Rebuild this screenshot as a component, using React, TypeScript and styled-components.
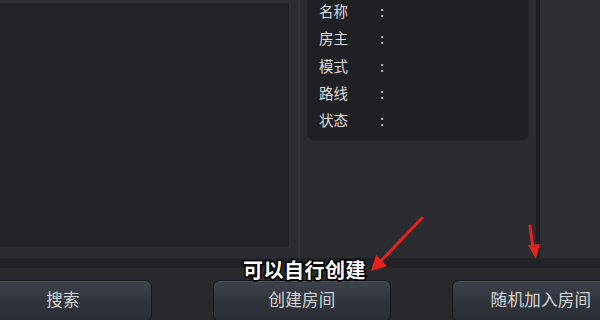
import React from "react";
import styled, { createGlobalStyle } from "styled-components";

const GlobalStyle = createGlobalStyle`
  html, body {
    margin: 0;
    padding: 0;
    background: #29292c;
  }
  body {
    font-family: "Noto Sans CJK SC", "Noto Sans", sans-serif;
  }
  * {
    box-sizing: border-box;
  }
`;

const infoRows = ["名称", "房主", "模式", "路线", "状态"];
const buttons = ["搜索", "创建房间", "随机加入房间"];

const App = () => {
  return (
    <Screen>
      <GlobalStyle />
      <TopArea>
        <LeftColumn>
          <ListPanel />
        </LeftColumn>
        <MiddleColumn>
          <InfoCard>
            {infoRows.map((label) => (
              <InfoRow key={label}>
                <InfoLabel>{label}</InfoLabel>
                <InfoColon>:</InfoColon>
              </InfoRow>
            ))}
          </InfoCard>
        </MiddleColumn>
        <Divider />
        <RightColumn />
      </TopArea>
      <Band />
      <ButtonBar>
        {buttons.map((text) => (
          <ActionButton key={text}>{text}</ActionButton>
        ))}
      </ButtonBar>
      <Caption>可以自行创建</Caption>
      <Arrows width="600" height="320" viewBox="0 0 600 320">
        <line x1="422" y1="218" x2="380" y2="262" stroke="#e8201c" strokeWidth="3" strokeLinecap="round" />
        <polygon points="371,271 376,255 387,266" fill="#e8201c" />
        <line x1="530" y1="226" x2="533" y2="248" stroke="#e8201c" strokeWidth="3" strokeLinecap="round" />
        <polygon points="536,259 528,245 540,244" fill="#e8201c" />
      </Arrows>
    </Screen>
  );
};
export default App;

const Screen = styled.div`
  position: relative;
  width: 600px;
  height: 320px;
  overflow: hidden;
  background: #29292c;
`;

const TopArea = styled.div`
  display: flex;
  height: 258px;
`;

const LeftColumn = styled.div`
  flex: none;
  width: 300px;
  padding: 0 7px 10px 0;
  border-right: 2px solid #35363a;
  background: #2a2b2e;
  display: flex;
`;

const ListPanel = styled.div`
  flex: 1;
  background: #212224;
  border-top: 3px solid #2c2d30;
  border-right: 2px solid #2f3033;
  border-bottom: 1px solid #2f3033;
`;

const MiddleColumn = styled.div`
  flex: none;
  width: 236px;
  padding: 0 7px;
  background: #2b2c30;
`;

const InfoCard = styled.div`
  margin-top: -6px;
  height: 147px;
  padding: 2px 0 0 11px;
  background: #1f2023;
  border: 1px solid #26272a;
  border-radius: 7px;
  display: flex;
  flex-direction: column;
`;

const InfoRow = styled.div`
  display: flex;
  align-items: center;
  height: 27.3px;
  color: #dedede;
  font-size: 14.5px;
`;

const InfoLabel = styled.span`
  width: 61px;
`;

const InfoColon = styled.span`
  color: #cfcfcf;
`;

const Divider = styled.div`
  flex: none;
  width: 4px;
  background: #1d1e21;
`;

const RightColumn = styled.div`
  flex: 1;
  background: #2d2e32;
`;

const Band = styled.div`
  height: 10px;
  background: #222326;
`;

const ButtonBar = styled.div`
  display: flex;
  gap: 61px;
  margin-left: -26px;
  padding-top: 12px;
`;

const ActionButton = styled.div`
  flex: none;
  width: 178px;
  height: 42px;
  padding-bottom: 4px;
  display: flex;
  align-items: center;
  justify-content: center;
  border: 1px solid #17181b;
  border-radius: 7px;
  background: linear-gradient(#3d424b, #2e333b 60%, #2a2e35);
  box-shadow: inset 0 1px 0 #4a4f58;
  color: #d6d6d6;
  font-size: 16.5px;
  letter-spacing: 0.3px;
`;

const Caption = styled.div`
  position: absolute;
  left: 243px;
  top: 255px;
  font-size: 20px;
  font-weight: 700;
  letter-spacing: 0.5px;
  color: #ffffff;
  -webkit-text-stroke: 3px #000;
  paint-order: stroke fill;
`;

const Arrows = styled.svg`
  position: absolute;
  left: 0;
  top: 0;
  pointer-events: none;
`;
